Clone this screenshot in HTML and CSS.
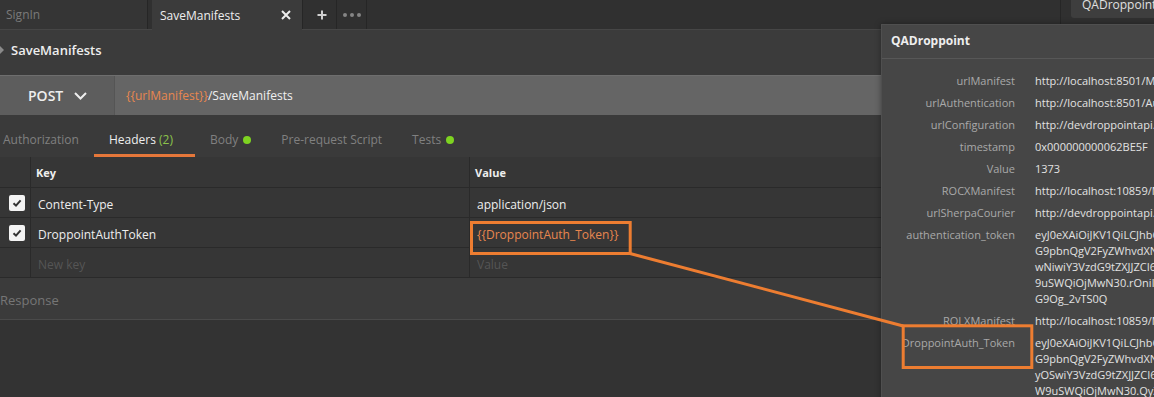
FILE: index.html
```html
<!DOCTYPE html>
<html>
<head>
<meta charset="utf-8">
<link rel="stylesheet" href="styles.css">
</head>
<body>
<div class="app">
  <div class="tabbar">
    <div class="tab tab-signin">SignIn</div>
    <div class="tab tab-active">
      <span>SaveManifests</span>
      <svg class="ico-close" width="10" height="10" viewBox="0 0 10 10"><path d="M1 1 L9 9 M9 1 L1 9" stroke="#eeeeee" stroke-width="2" fill="none"/></svg>
    </div>
    <div class="tab tab-btn tab-plus">
      <svg width="10" height="10" viewBox="0 0 10 10"><path d="M5 0.5 V9.5 M0.5 5 H9.5" stroke="#cfcfcf" stroke-width="2" fill="none"/></svg>
    </div>
    <div class="tab tab-btn tab-dots">
      <span class="dot"></span><span class="dot"></span><span class="dot"></span>
    </div>
    <div class="tab-spacer"></div>
    <div class="env-sep"></div>
    <div class="env-btn">QADroppoint</div>
  </div>

  <div class="req-name"><span class="caret"></span><span>SaveManifests</span></div>

  <div class="urlbar">
    <div class="method">
      <span>POST</span>
      <svg class="chev" width="13" height="8" viewBox="0 0 13 8"><path d="M1 1 L6.5 6.5 L12 1" stroke="#eeeeee" stroke-width="2" fill="none"/></svg>
    </div>
    <div class="url"><span class="var">{{urlManifest}}</span>/SaveManifests</div>
  </div>

  <div class="reqtabs">
    <div class="rtab">Authorization</div>
    <div class="rtab rtab-active">Headers <span class="count">(2)</span></div>
    <div class="rtab">Body <span class="gdot"></span></div>
    <div class="rtab">Pre-request Script</div>
    <div class="rtab">Tests <span class="gdot"></span></div>
  </div>

  <div class="htable">
    <div class="cell chk hrow"></div>
    <div class="cell hrow hkey">Key</div>
    <div class="cell hrow hval">Value</div>

    <div class="cell chk"><span class="cbox"><svg width="12" height="12" viewBox="0 0 12 12"><path d="M2.5 6.2 L5 8.6 L9.6 3.4" stroke="#333333" stroke-width="2" fill="none"/></svg></span></div>
    <div class="cell dkey">Content-Type</div>
    <div class="cell dval">application/json</div>

    <div class="cell chk"><span class="cbox"><svg width="12" height="12" viewBox="0 0 12 12"><path d="M2.5 6.2 L5 8.6 L9.6 3.4" stroke="#333333" stroke-width="2" fill="none"/></svg></span></div>
    <div class="cell dkey">DroppointAuthToken</div>
    <div class="cell dval var">{{DroppointAuth_Token}}</div>

    <div class="cell chk"></div>
    <div class="cell dkey ph">New key</div>
    <div class="cell dval ph">Value</div>
  </div>

  <div class="response">Response</div>
  <div class="rest"></div>
</div>

<div class="popover">
  <div class="pop-head">QADroppoint</div>
  <div class="pop-body">
    <div class="pl">urlManifest</div><div class="pv">http://localhost:8501/Manifest/api/</div>
    <div class="pl">urlAuthentication</div><div class="pv">http://localhost:8501/Authentication/api/</div>
    <div class="pl">urlConfiguration</div><div class="pv">http://devdroppointapi.azurewebsites.net/Configuration</div>
    <div class="pl">timestamp</div><div class="pv">0x000000000062BE5F</div>
    <div class="pl">Value</div><div class="pv">1373</div>
    <div class="pl">ROCXManifest</div><div class="pv">http://localhost:10859/Manifest/api/</div>
    <div class="pl">urlSherpaCourier</div><div class="pv">http://devdroppointapi.azurewebsites.net/Sherpa</div>
    <div class="pl">authentication_token</div>
    <div class="pv">
      <span class="ln">eyJ0eXAiOiJKV1QiLCJhbGciOiJIUzI1NiJ9.eyJ1c2VyIjoiRHJvcH</span>
      <span class="ln">G9pbnQgV2FyZWhvdXNlIiwidXNlcklkIjoiMTIzNDU2Nzg5MDEyMzQ1</span>
      <span class="ln">wNiwiY3VzdG9tZXJJZCI6IjEiLCJsb2NhdGlvbklkIjoiMjM0NTY3</span>
      <span class="ln">9uSWQiOjMwN30.rOnilZ3Vz5kQmFvY2xlbWVudHM0aV8yX3JP</span>
      <span class="ln">G9Og_2vTS0Q</span>
    </div>
    <div class="pl">ROLXManifest</div><div class="pv">http://localhost:10859/Manifest/api/</div>
    <div class="pl">DroppointAuth_Token</div>
    <div class="pv">
      <span class="ln">eyJ0eXAiOiJKV1QiLCJhbGciOiJIUzI1NiJ9.eyJ1c2VyIjoiRHJvcH</span>
      <span class="ln">G9pbnQgV2FyZWhvdXNlIiwidXNlcklkIjoiMTIzNDU2Nzg5MDEyMzQ1</span>
      <span class="ln">yOSwiY3VzdG9tZXJJZCI6IjEiLCJsb2NhdGlvbklkIjoiMjM0NTY3</span>
      <span class="ln">W9uSWQiOjMwN30.QyZ3Vz5kQmFvY2xlbWVudHM0aV8yX3JP</span>
      <span class="ln">mQ1Vz5kQ</span>
    </div>
  </div>
</div>

<svg class="annot" width="1154" height="397" viewBox="0 0 1154 397">
  <rect x="471.5" y="222.5" width="158.7" height="31" fill="none" stroke="#ed7d31" stroke-width="3"/>
  <line x1="630" y1="253.5" x2="903.2" y2="326" stroke="#ed7d31" stroke-width="3"/>
  <rect x="903.2" y="325.8" width="128.6" height="41.7" fill="none" stroke="#ed7d31" stroke-width="3"/>
</svg>
</body>
</html>
```

FILE: styles.css
```css
* { box-sizing: border-box; }

html, body {
  margin: 0;
  padding: 0;
}

body {
  width: 1154px;
  height: 397px;
  overflow: hidden;
  position: relative;
  background: #333333;
  font-family: "Open Sans", "DejaVu Sans", sans-serif;
  font-size: 12px;
  color: #dddddd;
}

.app {
  display: flex;
  flex-direction: column;
  height: 397px;
}

/* top tab bar */
.tabbar {
  display: flex;
  height: 30px;
  background: #303030;
  box-shadow: inset 0 -1px 0 #464646;
  flex-shrink: 0;
}

.tab {
  display: flex;
  align-items: center;
  height: 29px;
}

.tab-signin {
  width: 148px;
  padding-left: 6px;
  background: #353535;
  border-right: 1px solid #262626;
  color: #7a7a7a;
}

.tab-active {
  margin-left: 4px;
  width: 150px;
  height: 30px;
  padding: 0 11px 0 8px;
  background: #3b3b3b;
  justify-content: space-between;
  color: #eeeeee;
}

.tab-btn {
  justify-content: center;
  border-right: 1px solid #262626;
}

.tab-plus {
  width: 35px;
  border-left: 1px solid #262626;
  padding-left: 4px;
}

.tab-dots {
  width: 30px;
  gap: 3px;
}

.dot {
  width: 4px;
  height: 4px;
  border-radius: 50%;
  background: #858585;
}

.tab-spacer { flex: 1; }

.env-sep {
  width: 1px;
  height: 29px;
  background: #262626;
}

.env-btn {
  margin-left: 10px;
  width: 83px;
  height: 18px;
  padding-left: 11px;
  line-height: 10px;
  background: #3e3e3e;
  border-bottom-left-radius: 3px;
  color: #e0e0e0;
  white-space: nowrap;
  overflow: hidden;
}

/* request name */
.req-name {
  height: 45px;
  padding-bottom: 5px;
  display: flex;
  align-items: center;
  background: #3b3b3b;
  font-size: 13px;
  font-weight: 600;
  color: #eeeeee;
  flex-shrink: 0;
}

.caret {
  width: 0;
  height: 0;
  border-top: 4px solid transparent;
  border-bottom: 4px solid transparent;
  border-left: 4px solid #8a8a8a;
  margin-right: 7px;
}

/* url bar */
.urlbar {
  display: flex;
  height: 40px;
  border-top: 1px solid #6e6e6e;
  flex-shrink: 0;
}

.method {
  width: 115px;
  display: flex;
  align-items: center;
  padding-left: 28px;
  background: #5d5d5d;
  border-right: 1px solid #555555;
  font-size: 14px;
  font-weight: 600;
  color: #eeeeee;
}

.chev { margin-left: 11px; }

.url {
  flex: 1;
  display: flex;
  align-items: center;
  padding-left: 11px;
  background: #656565;
  color: #f0f0f0;
  white-space: pre;
}

.var { color: #e8874f; }

/* request tabs */
.reqtabs {
  display: flex;
  height: 42px;
  margin-left: -12px;
  background: #3a3a3a;
  flex-shrink: 0;
}

.rtab {
  padding: 17px 15px 0 15px;
  line-height: 16px;
  color: #808080;
  white-space: nowrap;
  display: flex;
  align-items: flex-start;
}

.rtab-active {
  color: #eeeeee;
  padding-right: 22px;
  border-bottom: 3px solid #e5773a;
  white-space: pre;
}

.count { color: #8cc34b; }

.gdot {
  width: 8px;
  height: 8px;
  border-radius: 50%;
  background: #7ed321;
  margin: 4px 0 0 5px;
}

/* headers table */
.htable {
  display: grid;
  grid-template-columns: 31px 439px 1fr;
  grid-template-rows: 31px 30px 30px 30px;
  background: #363636;
  flex-shrink: 0;
}

.cell {
  display: flex;
  align-items: center;
  border-bottom: 1px solid #2a2a2a;
  white-space: nowrap;
}

.chk, .dkey, .hkey {
  border-right: 1px solid #2a2a2a;
}

.hkey, .hval {
  font-size: 11px;
  font-weight: 700;
  color: #eeeeee;
  padding-left: 5px;
}

.dkey, .dval {
  padding-left: 7px;
  padding-top: 3px;
  color: #eeeeee;
}

.dval.var { color: #e8874f; }

.ph { color: #555555; }

.chk {
  justify-content: flex-start;
  padding-left: 9px;
}

.cbox {
  width: 16px;
  height: 16px;
  border-radius: 2px;
  background: #f4f4f4;
  display: flex;
  align-items: center;
  justify-content: center;
}

.response {
  height: 42px;
  padding-top: 3px;
  display: flex;
  align-items: center;
  background: #3b3b3b;
  border-bottom: 1px solid #4a4a4a;
  font-size: 13px;
  color: #767676;
  flex-shrink: 0;
}

.rest { flex: 1; background: #333333; }

/* environment popover */
.popover {
  position: absolute;
  left: 881px;
  top: 24px;
  width: 420px;
  height: 420px;
  background: #464646;
  border-left: 1px solid #4f4f4f;
  border-top: 1px solid #4f4f4f;
  box-shadow: 0 0 6px rgba(0, 0, 0, 0.35);
}

.pop-head {
  height: 34px;
  line-height: 32px;
  padding-left: 9px;
  border-bottom: 1px solid #575757;
  font-size: 12px;
  font-weight: 700;
  color: #eeeeee;
}

.pop-body {
  display: grid;
  grid-template-columns: 133px auto;
  column-gap: 20px;
  row-gap: 6px;
  padding-top: 14px;
  font-size: 11px;
  line-height: 16px;
}

.pl {
  text-align: right;
  color: #a9a9a9;
  white-space: nowrap;
}

.pv {
  color: #e2e2e2;
  white-space: nowrap;
}

.ln { display: block; }

.annot {
  position: absolute;
  left: 0;
  top: 0;
  pointer-events: none;
}
```
